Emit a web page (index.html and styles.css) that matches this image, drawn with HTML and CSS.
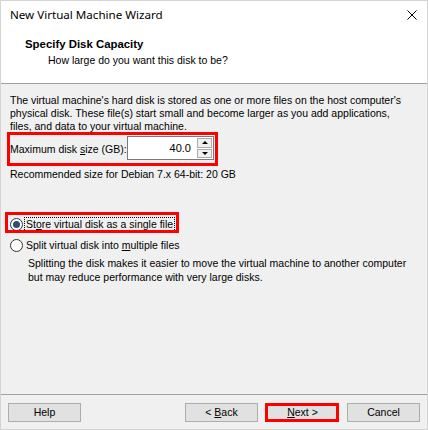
FILE: index.html
```html
<!DOCTYPE html>
<html>
<head>
<meta charset="utf-8">
<link rel="stylesheet" href="styles.css">
</head>
<body>
<div class="window">
  <div class="titlebar">
    <span class="title">New Virtual Machine Wizard</span>
    <svg class="close" width="10" height="10" viewBox="0 0 10 10"><path d="M0.5 0.5L9.5 9.5M9.5 0.5L0.5 9.5" stroke="#000" stroke-width="1" fill="none"/></svg>
  </div>
  <div class="header">
    <div class="heading">Specify Disk Capacity</div>
    <div class="subheading">How large do you want this disk to be?</div>
  </div>
  <div class="content">
    <p class="intro">The virtual machine's hard disk is stored as one or more files on the host computer's<br>physical disk. These file(s) start small and become larger as you add applications,<br>files, and data to your virtual machine.</p>
    <div class="size-row marked">
      <span class="size-label">Maximum disk <u>s</u>ize (GB):</span>
      <div class="spin">
        <div class="spin-value">40.0</div>
        <div class="spin-btns">
          <div class="spin-btn"><span class="tri-up"></span></div>
          <div class="spin-btn"><span class="tri-down"></span></div>
        </div>
      </div>
    </div>
    <div class="recommend">Recommended size for Debian 7.x 64-bit: 20 GB</div>
    <div class="radios">
      <div class="radio-row marked-radio">
        <span class="radio checked"></span>
        <span class="radio-label focus">St<u>o</u>re virtual disk as a single file</span>
      </div>
      <div class="radio-row">
        <span class="radio"></span>
        <span class="radio-label">Split virtual disk into <u>m</u>ultiple files</span>
      </div>
    </div>
    <p class="desc">Splitting the disk makes it easier to move the virtual machine to another computer<br>but may reduce performance with very large disks.</p>
  </div>
  <div class="footer">
    <div class="btn">Help</div>
    <div class="spacer"></div>
    <div class="btn">&lt; <u>B</u>ack</div>
    <div class="btn next"><u>N</u>ext &gt;</div>
    <div class="btn">Cancel</div>
  </div>
</div>
</body>
</html>
```

FILE: styles.css
```css
* { box-sizing: border-box; }
html, body { margin: 0; padding: 0; }
body {
  width: 428px;
  height: 430px;
  overflow: hidden;
  font-family: "Liberation Sans", Arial, sans-serif;
  font-size: 10.5px;
  color: #000;
  background: #f0f0f0;
  white-space: nowrap;
}
.window {
  width: 428px;
  height: 430px;
  border: 1px solid #d4d4d4;
  background: #f0f0f0;
  display: flex;
  flex-direction: column;
}
.titlebar {
  height: 28px;
  background: #fff;
  display: flex;
  align-items: center;
  justify-content: space-between;
  padding: 0 10px 0 9px;
}
.title {
  font-family: "Noto Sans", "Liberation Sans", sans-serif;
  font-size: 11.6px;
  line-height: 16px;
}
.close { display: block; }
.header {
  height: 55px;
  background: #fff;
  border-bottom: 1px solid #a0a0a0;
  padding: 8px 0 0 24px;
}
.heading {
  font-weight: bold;
  font-size: 11.4px;
  line-height: 14px;
}
.subheading {
  margin-top: 2px;
  padding-left: 23px;
  line-height: 14px;
}
.content {
  flex: 1;
  padding: 10px 9px 0 9px;
}
.intro {
  margin: 0;
  line-height: 13px;
}
.size-row {
  position: relative;
  display: flex;
  align-items: center;
  width: 204px;
  height: 24px;
  margin-top: 3px;
}
.marked::after {
  content: "";
  position: absolute;
  top: -4px;
  left: -3px;
  right: -4px;
  bottom: -6px;
  border: 3px solid #f00;
}
.size-label {
  width: 117px;
  padding-top: 2px;
}
.spin {
  width: 87px;
  height: 24px;
  display: flex;
  border: 1px solid #7a7a7a;
  background: #fff;
}
.spin-value {
  flex: 1;
  text-align: right;
  padding-right: 5px;
  line-height: 22px;
  font-size: 11px;
}
.spin-btns {
  width: 17px;
  display: flex;
  flex-direction: column;
  gap: 1px;
  padding: 1px;
}
.spin-btn {
  flex: 1;
  background: #f0f0f0;
  border: 1px solid #adadad;
  display: flex;
  align-items: center;
  justify-content: center;
}
.tri-up {
  width: 0; height: 0;
  border-left: 3px solid transparent;
  border-right: 3px solid transparent;
  border-bottom: 3px solid #000;
}
.tri-down {
  width: 0; height: 0;
  border-left: 3px solid transparent;
  border-right: 3px solid transparent;
  border-top: 3px solid #000;
}
.recommend {
  margin-top: 8px;
  line-height: 13px;
}
.radios {
  margin-top: 34px;
  display: flex;
  flex-direction: column;
  align-items: flex-start;
  gap: 3px;
}
.radio-row {
  position: relative;
  display: inline-flex;
  align-items: center;
  height: 18px;
}
.marked-radio::after {
  content: "";
  position: absolute;
  top: -3px;
  left: -5px;
  right: -4px;
  bottom: 0;
  border: 3px solid #f00;
}
.radio {
  width: 13px;
  height: 13px;
  border-radius: 50%;
  border: 1px solid #333;
  background: #fff;
  display: flex;
  align-items: center;
  justify-content: center;
}
.radio.checked { border-color: #1f3a5a; }
.radio.checked::before {
  content: "";
  width: 7px;
  height: 7px;
  border-radius: 50%;
  background: #2e4d70;
}
.radio-label {
  margin-left: 1px;
  padding: 0 1px;
  border: 1px solid transparent;
  line-height: 13px;
}
.radio-label.focus { border: 1px dotted #000; }
.desc {
  margin: 2px 0 0 0;
  padding-left: 18px;
  line-height: 14px;
}
.footer {
  border-top: 1px solid #a0a0a0;
  padding: 8px 7px 7px 7px;
  display: flex;
  gap: 8px;
}
.spacer { flex: 1; }
.btn {
  position: relative;
  width: 73px;
  height: 19px;
  background: #e1e1e1;
  border: 1px solid #adadad;
  text-align: center;
  line-height: 17px;
}
.next::after {
  content: "";
  position: absolute;
  top: -1px;
  left: -2px;
  right: -1px;
  bottom: -1px;
  border: 3px solid #f00;
}
```
